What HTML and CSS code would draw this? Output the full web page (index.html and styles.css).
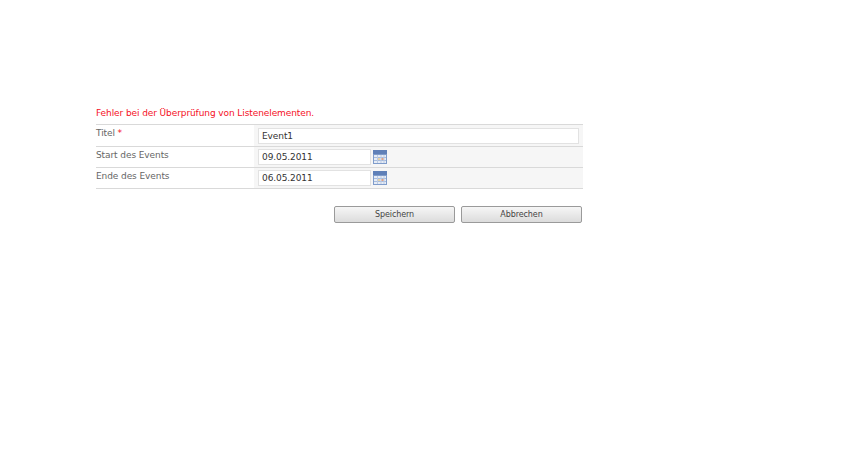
FILE: index.html
```html
<!DOCTYPE html>
<html lang="de">
  <head>
    <meta charset="UTF-8" />
    <title>Event</title>
    <link rel="stylesheet" href="styles.css">
  </head>
  <body>
    <main class="panel">
      <p class="error">Fehler bei der Überprüfung von Listenelementen.</p>
      <div class="fields">
        <div class="row row-first">
          <div class="label">Titel <span class="required">*</span></div>
          <div class="value"><input class="input input-wide" type="text" value="Event1"></div>
        </div>
        <div class="row">
          <div class="label">Start des Events</div>
          <div class="value">
            <input class="input input-date" type="text" value="09.05.2011">
            <svg class="cal" viewBox="0 0 14 14">
              <rect width="14" height="14" fill="#7f9ccb"/>
              <rect width="14" height="4" fill="#5f80b8"/>
              <rect x="1" y="5" width="12" height="8" fill="#e6ecf5"/>
              <path d="M1 7.500h12M1 10.500h12" stroke="#a6bbdc" stroke-width="1"/>
              <path d="M4.500 5v8M8 5v8M11 5v8" stroke="#bccbe4" stroke-width="1"/>
              <rect x="8.500" y="8" width="2" height="2" fill="#e0a184"/>
              <rect x="5" y="8" width="2" height="2" fill="#e7d3a6"/>
            </svg>
          </div>
        </div>
        <div class="row">
          <div class="label">Ende des Events</div>
          <div class="value">
            <input class="input input-date" type="text" value="06.05.2011">
            <svg class="cal" viewBox="0 0 14 14">
              <rect width="14" height="14" fill="#7f9ccb"/>
              <rect width="14" height="4" fill="#5f80b8"/>
              <rect x="1" y="5" width="12" height="8" fill="#e6ecf5"/>
              <path d="M1 7.500h12M1 10.500h12" stroke="#a6bbdc" stroke-width="1"/>
              <path d="M4.500 5v8M8 5v8M11 5v8" stroke="#bccbe4" stroke-width="1"/>
              <rect x="8.500" y="8" width="2" height="2" fill="#e0a184"/>
              <rect x="5" y="8" width="2" height="2" fill="#e7d3a6"/>
            </svg>
          </div>
        </div>
      </div>
      <div class="actions">
        <button class="btn" type="button">Speichern</button>
        <button class="btn" type="button">Abbrechen</button>
      </div>
    </main>
  </body>
</html>
```

FILE: styles.css
```css
* {
  box-sizing: border-box;
  margin: 0;
  padding: 0;
}
body {
  background: #fff;
  font-family: "DejaVu Sans", Verdana, sans-serif;
  font-size: 9px;
  letter-spacing: -0.09px;
  color: #333;
}
.panel {
  width: 487px;
  margin: 108px 0 0 96px;
}
.error {
  color: #f5101f;
  line-height: 11px;
  height: 16px;
}
.fields {
  border-bottom: 1px solid #d9d9d9;
}
.row {
  display: flex;
  height: 21px;
  border-top: 1px solid #d9d9d9;
}
.row-first {
  height: 22px;
}
.label {
  width: 158px;
  padding-top: 2px;
  color: #666;
  line-height: 12px;
}
.required {
  color: #f5101f;
}
.value {
  flex: 1;
  display: flex;
  align-items: center;
  gap: 2px;
  padding-left: 4px;
  background: #f6f6f6;
}
.input {
  height: 16px;
  padding: 0 3px;
  border: 1px solid #e2e2e2;
  background: #fff;
  font: inherit;
  letter-spacing: inherit;
  color: #333;
}
.input-wide {
  width: 321px;
}
.input-date {
  width: 113px;
}
.cal {
  width: 14px;
  height: 14px;
}
.actions {
  display: flex;
  justify-content: flex-end;
  gap: 6px;
  margin-top: 17px;
  padding-right: 1px;
}
.btn {
  width: 121px;
  height: 17px;
  border: 1px solid #9a9a9a;
  border-radius: 2px;
  background: linear-gradient(#f6f6f6, #dcdcdc);
  font: inherit;
  font-size: 8px;
  letter-spacing: inherit;
  color: #444;
}
```
